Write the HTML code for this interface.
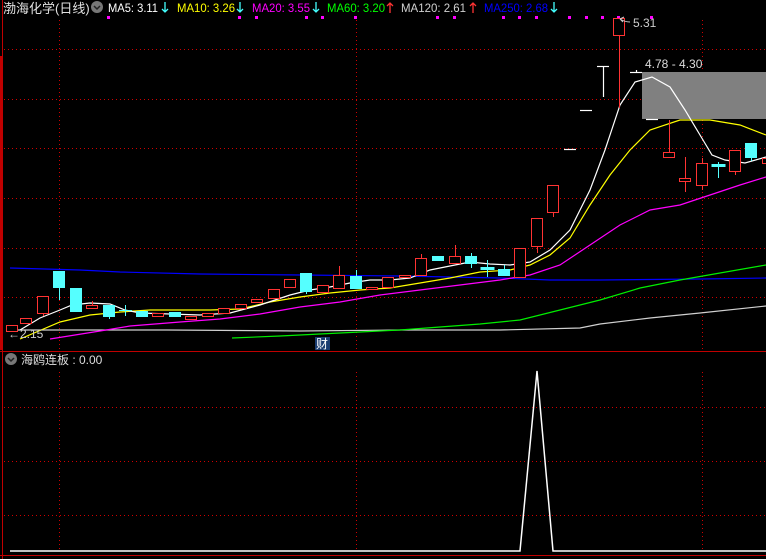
<!DOCTYPE html>
<html><head><meta charset="utf-8"><style>
html,body{margin:0;padding:0;background:#000;}
body{width:766px;height:559px;overflow:hidden;position:relative;font-family:"Liberation Sans","Noto Sans CJK SC",sans-serif;}
svg{position:absolute;left:0;top:0;}
</style></head><body>
<svg width="766" height="559" viewBox="0 0 766 559" xmlns="http://www.w3.org/2000/svg" font-family="Liberation Sans, Noto Sans CJK SC, sans-serif">
<defs>
<pattern id="hd" x="0" y="0" width="4" height="1" patternUnits="userSpaceOnUse"><rect width="1" height="1" fill="#d00000"/></pattern>
<pattern id="vd" x="0" y="0" width="1" height="4" patternUnits="userSpaceOnUse"><rect width="1" height="1" fill="#d00000"/></pattern>
</defs>
<rect width="766" height="559" fill="#000"/>
<g fill="url(#hd)">
<rect x="4" y="49" width="762" height="1"/>
<rect x="4" y="99" width="762" height="1"/>
<rect x="4" y="148" width="762" height="1"/>
<rect x="4" y="198" width="762" height="1"/>
<rect x="4" y="248" width="762" height="1"/>
<rect x="4" y="297" width="762" height="1"/>
<rect x="4" y="407" width="762" height="1"/>
<rect x="4" y="461" width="762" height="1"/>
<rect x="4" y="515" width="762" height="1"/>
</g>
<g fill="url(#vd)">
<rect x="59" y="20" width="1" height="330"/>
<rect x="356" y="20" width="1" height="330"/>
<rect x="702" y="20" width="1" height="330"/>
<rect x="59" y="370" width="1" height="180"/>
<rect x="356" y="370" width="1" height="180"/>
<rect x="702" y="370" width="1" height="180"/>
</g>
<rect x="2" y="0" width="1" height="559" fill="#c00000"/>
<rect x="0" y="56" width="3" height="294" fill="#c00000"/>
<rect x="0" y="351" width="766" height="1" fill="#c00000"/>
<rect x="0" y="555" width="766" height="1" fill="#c00000"/>
<text x="3" y="13" font-size="13" fill="#e0e0e0">渤海化学(日线)</text>
<circle cx="97" cy="7" r="6" fill="#777"/>
<path d="M94 6 L97 9 L100 6" stroke="#222" stroke-width="1.5" fill="none"/>
<g font-size="12">
<text x="108" y="12" fill="#fff" textLength="50" lengthAdjust="spacingAndGlyphs">MA5: 3.11</text>
<text x="177" y="12" fill="#ffff00" textLength="58" lengthAdjust="spacingAndGlyphs">MA10: 3.26</text>
<text x="252" y="12" fill="#ff00ff" textLength="58" lengthAdjust="spacingAndGlyphs">MA20: 3.55</text>
<text x="327" y="12" fill="#00ff00" textLength="58" lengthAdjust="spacingAndGlyphs">MA60: 3.20</text>
<text x="401" y="12" fill="#d0d0d0" textLength="65" lengthAdjust="spacingAndGlyphs">MA120: 2.61</text>
<text x="484" y="12" fill="#0000ff" textLength="64" lengthAdjust="spacingAndGlyphs">MA250: 2.68</text>
</g>
<g stroke-width="1.3" fill="none">
<path d="M165 2 V12 M162 9 L165 12 L168 9" stroke="#4ff"/>
<path d="M240 2 V12 M237 9 L240 12 L243 9" stroke="#4ff"/>
<path d="M316 2 V12 M313 9 L316 12 L319 9" stroke="#4ff"/>
<path d="M390 3 V13 M387 6 L390 3 L393 6" stroke="#f33"/>
<path d="M473 3 V13 M470 6 L473 3 L476 6" stroke="#f33"/>
<path d="M554 2 V12 M551 9 L554 12 L557 9" stroke="#4ff"/>
</g>
<g fill="#ff00ff">
<rect x="107" y="16" width="3" height="3"/><rect x="238" y="16" width="3" height="3"/><rect x="255" y="16" width="3" height="3"/>
<rect x="305" y="16" width="3" height="3"/><rect x="321" y="16" width="3" height="3"/><rect x="354" y="16" width="3" height="3"/>
<rect x="436" y="16" width="3" height="3"/><rect x="453" y="16" width="3" height="3"/><rect x="502" y="16" width="3" height="3"/>
<rect x="518" y="16" width="3" height="3"/><rect x="535" y="16" width="3" height="3"/><rect x="568" y="16" width="3" height="3"/>
<rect x="585" y="16" width="3" height="3"/><rect x="601" y="16" width="3" height="3"/><rect x="617" y="16" width="3" height="3"/>
<rect x="650" y="16" width="3" height="3"/>
</g>
<rect x="642" y="72" width="124" height="47" fill="#808080"/>
<text x="645" y="68" font-size="12" fill="#ddd">4.78 - 4.30</text>
<g fill="none" stroke-width="1.2">
<polyline stroke="#0000ff" points="10,268 80,270 120,272 200,274 300,275 400,276 500,278 550,280 600,280 700,279 766,278"/>
<polyline stroke="#d0d0d0" points="10,330 100,330 167,330 300,331 400,330 500,330 580,328 600,324 650,318 700,313 766,306"/>
<polyline stroke="#00ee00" points="232,338 280,336 320,334 360,332 400,330 440,327 480,324 520,320 560,310 600,300 640,288 680,280 720,273 766,265"/>
<polyline stroke="#ff00ff" points="50,339 100,331 130,326 180,322 220,319 260,314 300,307 340,302 380,295 420,290 460,285 500,280 530,275 560,265 590,245 620,225 650,210 680,205 710,195 740,185 766,177"/>
<polyline stroke="#ffff00" points="20,339 60,322 90,315 120,312 150,310 180,310 210,310 240,309 270,302 300,297 330,293 360,290 390,288 420,283 450,278 480,272 510,270 530,265 550,255 570,238 590,205 610,175 630,150 650,130 680,120 710,120 740,125 766,135"/>
<polyline stroke="#fff" points="20,330 40,318 60,310 72,305 90,303 110,304 125,310 140,313 170,314 200,315 230,313 260,305 290,295 310,290 330,287 350,283 370,280 390,280 410,278 430,270 450,266 470,262 490,264 510,265 530,262 550,250 570,230 590,190 605,150 620,105 635,82 652,77 670,87 685,110 700,135 712,155 725,160 745,163 766,157"/>
</g>
<g stroke="#ff3333" fill="#000" stroke-width="1">
<rect x="6.5" y="325.5" width="11" height="6"/>
<rect x="20.5" y="318.5" width="11" height="5"/>
<line x1="43.5" y1="313" x2="43.5" y2="316"/><rect x="37.5" y="296.5" width="11" height="17"/>
<line x1="92.5" y1="301" x2="92.5" y2="305"/><rect x="86.5" y="305.5" width="11" height="3"/>
<rect x="152.5" y="313.5" width="11" height="3"/>
<rect x="185.5" y="316.5" width="11" height="3"/>
<rect x="202.5" y="313.5" width="11" height="3"/>
<rect x="218.5" y="308.5" width="11" height="5"/>
<rect x="235.5" y="304.5" width="11" height="4"/>
<rect x="251.5" y="299.5" width="11" height="3"/>
<rect x="268.5" y="289.5" width="11" height="9"/>
<rect x="284.5" y="279.5" width="11" height="8"/>
<rect x="317.5" y="285.5" width="11" height="7"/>
<line x1="339.5" y1="266" x2="339.5" y2="275"/><rect x="333.5" y="275.5" width="11" height="13"/>
<rect x="366.5" y="287.5" width="11" height="2"/>
<rect x="382.5" y="277.5" width="11" height="10"/>
<rect x="399.5" y="275.5" width="11" height="2"/>
<line x1="421.5" y1="254" x2="421.5" y2="258"/><rect x="415.5" y="258.5" width="11" height="17"/>
<line x1="455.5" y1="245" x2="455.5" y2="256"/><rect x="449.5" y="256.5" width="11" height="7"/>
<rect x="514.5" y="248.5" width="11" height="29"/>
<line x1="537.5" y1="246" x2="537.5" y2="253"/><rect x="531.5" y="218.5" width="11" height="28"/>
<line x1="553.5" y1="212" x2="553.5" y2="217"/><rect x="547.5" y="185.5" width="11" height="27"/>
<line x1="619.5" y1="35" x2="619.5" y2="108"/><rect x="613.5" y="18.5" width="11" height="17"/>
<line x1="669.5" y1="120" x2="669.5" y2="152"/><rect x="663.5" y="152.5" width="11" height="5"/>
<line x1="685.5" y1="157" x2="685.5" y2="192"/><rect x="679.5" y="178.5" width="11" height="3"/>
<line x1="702.5" y1="158" x2="702.5" y2="190"/><rect x="696.5" y="163.5" width="11" height="22"/>
<line x1="735.5" y1="171" x2="735.5" y2="175"/><rect x="729.5" y="150.5" width="11" height="21"/>
<rect x="762.5" y="158.5" width="8" height="5"/>
</g>
<g fill="#55ffff" stroke="#55ffff">
<line x1="59.5" y1="287" x2="59.5" y2="300"/><rect x="53.5" y="271.5" width="11" height="16"/>
<rect x="70.5" y="288.5" width="11" height="23"/>
<line x1="109.5" y1="316" x2="109.5" y2="319"/><rect x="103.5" y="305.5" width="11" height="11"/>
<line x1="125.5" y1="305" x2="125.5" y2="316"/><line x1="119" y1="310.5" x2="132" y2="310.5"/>
<rect x="136.5" y="311.5" width="11" height="5"/>
<rect x="169.5" y="312.5" width="11" height="4"/>
<line x1="306.5" y1="291" x2="306.5" y2="294"/><rect x="300.5" y="273.5" width="11" height="18"/>
<line x1="356.5" y1="270" x2="356.5" y2="276"/><rect x="350.5" y="276.5" width="11" height="12"/>
<rect x="432.5" y="256.5" width="11" height="4"/>
<line x1="471.5" y1="253" x2="471.5" y2="268"/><rect x="465.5" y="256.5" width="11" height="7"/>
<line x1="487.5" y1="260" x2="487.5" y2="277"/><rect x="481" y="267.5" width="13" height="2"/>
<line x1="504.5" y1="265" x2="504.5" y2="275"/><rect x="498.5" y="269.5" width="11" height="6"/>
<line x1="718.5" y1="162" x2="718.5" y2="178"/><rect x="712" y="164.5" width="13" height="2"/>
<line x1="751.5" y1="157" x2="751.5" y2="161"/><rect x="745.5" y="143.5" width="11" height="14"/>
</g>
<g stroke="#fff" stroke-width="1.2">
<line x1="564" y1="149.5" x2="576" y2="149.5"/>
<line x1="580" y1="110.5" x2="592" y2="110.5"/>
<line x1="597" y1="66.5" x2="609" y2="66.5"/><line x1="603.5" y1="66" x2="603.5" y2="97"/>
<line x1="630" y1="72.5" x2="642" y2="72.5"/><line x1="636.5" y1="70" x2="636.5" y2="72"/>
<line x1="646" y1="119.5" x2="658" y2="119.5"/>
</g>
<path d="M620 19 L624 17 M620 19 L623 22 M620 19 Q625 22 630 22" stroke="#ccc" fill="none"/>
<text x="633" y="27" font-size="12" fill="#ccc">5.31</text>
<text x="8" y="338" font-size="12" fill="#ccc">←2.15</text>
<rect x="315" y="337" width="15" height="13" fill="#1a3c70"/>
<text x="316" y="348" font-size="12" fill="#fff">财</text>
<circle cx="11" cy="359" r="6" fill="#777"/>
<path d="M8 358 L11 361 L14 358" stroke="#222" stroke-width="1.5" fill="none"/>
<text x="21" y="364" font-size="12" fill="#ddd">海鸥连板 : 0.00</text>
<polyline fill="none" stroke="#fff" stroke-width="1.5" points="10,551 520,551 537,371 553,551 766,551"/>
</svg>
</body></html>
